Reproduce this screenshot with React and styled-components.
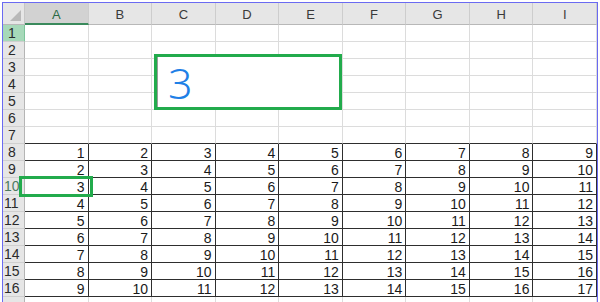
import React from "react";
import styled, { createGlobalStyle } from "styled-components";

const GlobalStyle = createGlobalStyle`
  html, body {
    margin: 0;
    padding: 0;
    background: #ffffff;
    overflow: hidden;
  }
  body {
    font-family: "Liberation Sans", Arial, sans-serif;
  }
`;

const COLS = ["A", "B", "C", "D", "E", "F", "G", "H", "I"];
const ROWS = Array.from({ length: 17 }, (_, i) => i + 1);
const FIRST_DATA = 8;
const LAST_DATA = 16;

const Window = styled.div`
  position: relative;
  margin: 2px 0 0 2px;
  width: 594px;
  height: 300px;
  border-top: 1px solid #6a6af2;
  border-left: 1px solid #6a6af2;
  border-right: 1px solid #6a6af2;
  overflow: hidden;
`;

const Sheet = styled.div`
  display: grid;
  grid-template-columns: 22px repeat(9, 1fr);
  grid-template-rows: 22px repeat(17, 17px);
`;

const Corner = styled.div`
  position: relative;
  background: #e6e6e6;
  border-right: 1px solid #c6c6c6;
  border-bottom: 1px solid #b8b8b8;
  box-sizing: border-box;

  &::after {
    content: "";
    position: absolute;
    right: 3px;
    bottom: 3px;
    width: 0;
    height: 0;
    border-left: 11px solid transparent;
    border-bottom: 11px solid #b9b9b9;
  }
`;

const ColHead = styled.div`
  display: flex;
  align-items: center;
  justify-content: center;
  padding-top: 2px;
  box-sizing: border-box;
  font-size: 13px;
  color: ${(p) => (p.$active ? "#2b6a45" : "#3a3a3a")};
  background: ${(p) => (p.$active ? "#d2d2d2" : "#e6e6e6")};
  border-right: 1px solid #cdcdcd;
  border-bottom: ${(p) => (p.$active ? "2px solid #3a8a5c" : "1px solid #b8b8b8")};
`;

const RowHead = styled.div`
  display: flex;
  align-items: center;
  padding-left: ${(p) => (p.$wide ? "1px" : "5px")};
  box-sizing: border-box;
  font-size: 14px;
  color: ${(p) => (p.$tint ? "#4d7a60" : "#2a2a2a")};
  background: ${(p) => (p.$active ? "#a6d9b9" : "#e6e6e6")};
  border-right: 1px solid ${(p) => (p.$active ? "#7cc39a" : "#b5b5b5")};
  border-bottom: 1px solid #cfcfcf;
  overflow: visible;
  white-space: nowrap;
`;

const Cell = styled.div`
  display: flex;
  align-items: center;
  justify-content: flex-end;
  padding: 1px 3px 0 0;
  box-sizing: border-box;
  font-size: 14px;
  color: #1a1a1a;
  background: #ffffff;
  border-right: 1px solid ${(p) => (p.$data ? "#2e2e2e" : "#dcdcdc")};
  border-bottom: 1px solid ${(p) => (p.$dataBottom ? "#2e2e2e" : "#dcdcdc")};
`;

const TextBox = styled.div`
  position: absolute;
  left: 151px;
  top: 51px;
  width: 188px;
  height: 56px;
  box-sizing: border-box;
  border: 3px solid #22ab4c;
  background: #ffffff;
  box-shadow: inset 1px 0 0 #9a9a9a;
  display: flex;
  align-items: center;
  padding: 1px 0 0 11px;
  font-family: "Noto Sans", "Liberation Sans", sans-serif;
  font-weight: 300;
  font-size: 43px;
  line-height: 1;
  color: #1f80e6;
`;

const Highlight = styled.div`
  position: absolute;
  left: 16px;
  top: 173px;
  width: 74px;
  height: 21px;
  box-sizing: border-box;
  border: 3px solid #22ab4c;
  pointer-events: none;
`;

export default function App() {
  return (
    <>
      <GlobalStyle />
      <Window>
        <Sheet>
          <Corner />
          {COLS.map((c, ci) => (
            <ColHead key={c} $active={ci === 0}>
              {c}
            </ColHead>
          ))}
          {ROWS.map((r) => (
            <React.Fragment key={r}>
              <RowHead $active={r === 1} $tint={r === 10} $wide={r >= 10}>
                {r <= LAST_DATA ? r : ""}
              </RowHead>
              {COLS.map((c, ci) => {
                const inData = r >= FIRST_DATA && r <= LAST_DATA;
                return (
                  <Cell
                    key={c}
                    $data={inData}
                    $dataBottom={r >= FIRST_DATA - 1 && r <= LAST_DATA}
                  >
                    {inData ? r - FIRST_DATA + ci + 1 : ""}
                  </Cell>
                );
              })}
            </React.Fragment>
          ))}
        </Sheet>
        <TextBox>3</TextBox>
        <Highlight />
      </Window>
    </>
  );
}
